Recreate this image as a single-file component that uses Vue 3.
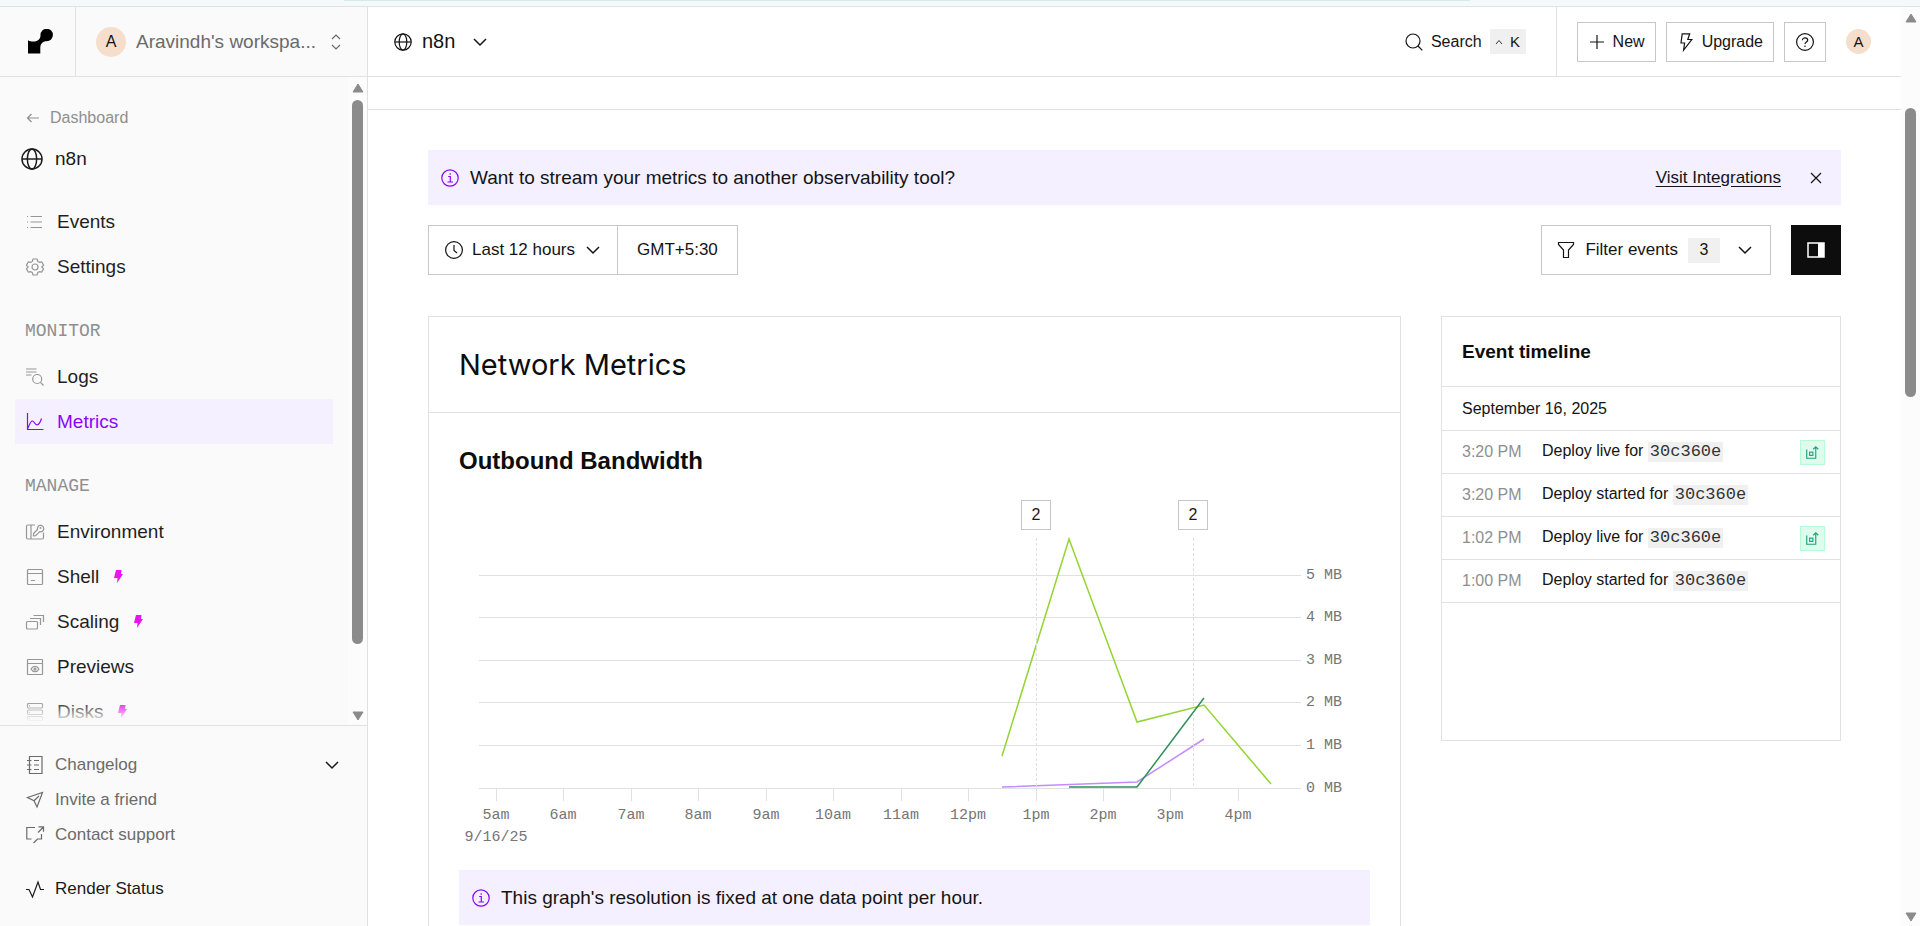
<script setup>
const primaryNav = [
  { label: 'Events', icon: 'list' },
  { label: 'Settings', icon: 'gear' },
]
const sections = [
  {
    title: 'MONITOR',
    items: [
      { label: 'Logs', icon: 'logs' },
      { label: 'Metrics', icon: 'metrics', active: true },
    ],
  },
  {
    title: 'MANAGE',
    items: [
      { label: 'Environment', icon: 'env' },
      { label: 'Shell', icon: 'shell', paid: true },
      { label: 'Scaling', icon: 'scaling', paid: true },
      { label: 'Previews', icon: 'previews' },
      { label: 'Disks', icon: 'disks', paid: true },
    ],
  },
]
const groups = [{ title: '', items: primaryNav }, ...sections]

const icons = {
  list: '<path d="M1 3.500h1M1 9h1M1 14.500h1M4.500 3.500H16M4.500 9H16M4.500 14.500H16"/>',
  gear: '<circle cx="9" cy="9" r="3"/><path d="M7 1h4l.7 2.400 1.600.9L15.600 3.800l2 3.300-1.800 1.900 1.800 1.900-2 3.300-2.300-.5-1.600.9L11 17H7l-.7-2.400-1.600-.9-2.300.5-2-3.300L2.200 9 .4 7.100l2-3.300 2.300.5 1.600-.9z" stroke-linejoin="round"/>',
  logs: '<path d="M0 1h10.500M0 4h10.500M0 7h5.500"/><circle cx="11.200" cy="11" r="4.500"/><path d="M14.500 14.300 17.500 17.500"/>',
  metrics: '<path d="M1.500 0v16.500H17.500M1.500 16C3.500 12 4.500 7.500 6.500 8c2 .6 3 4.500 5 3.800 1.500-.5 3-3 4-6.300"/>',
  env: '<path d="M9 2H2A1.500 1.500 0 0 0 .5 3.500v11A1.500 1.500 0 0 0 2 16h14a1.500 1.500 0 0 0 1.500-1.500V9.500M5 2v14M7.500 12.800v-2.300l4-4a3.200 3.200 0 1 1 2.200 2.200l-4 4z"/><circle cx="14.500" cy="5" r=".4"/>',
  shell: '<rect x="1.500" y="1.500" width="15" height="15" rx="1"/><path d="M1.500 5.500h15M5 12.500h4"/>',
  scaling: '<rect x=".5" y="8.500" width="11" height="7.500" rx="1"/><path d="M4 5.500h10.500V12M7.500 2.500h10V9"/>',
  previews: '<rect x="1.500" y="1.500" width="15" height="15" rx=".5"/><path d="M1.500 5.500h15M5 11c2-3.600 6-3.600 8 0-2 3.600-6 3.600-8 0z"/><circle cx="9" cy="11" r="1"/>',
  disks: '<rect x="1.500" y=".5" width="15" height="4.500" rx="1"/><rect x="1.500" y="7" width="15" height="4.500" rx="1"/><rect x="1.500" y="13.500" width="15" height="4" rx="1"/><path d="M3 2.800h1M3 9.300h1M3 15.600h1"/>',
  book: '<path d="M3.500.5H16v17H3.500zM1 4.500h4.500M1 9h4.500M1 13.500h4.500M8 4.500h5M8 9h5M8 13.500h5"/>',
  send: '<path d="M1.500 6.500 16.500 1.500 11 16 8 9.800zM8 9.800 13 5"/>',
  support: '<path d="M9 1.500H.8V13H5.500M15.500 8v5H11.500L7.500 17M12 6.500 17.500 1M12.500.8h5v5"/>',
  pulse: '<path d="M0 9.500h3L6.500 17 12 2l2.500 7.500H18"/>',
  globe: '<circle cx="9" cy="9" r="8.200"/><ellipse cx="9" cy="9" rx="3.800" ry="8.200"/><path d="M.8 9h16.400"/>',
  back: '<path d="M3.500 9h11.500M7.500 5 3.500 9l4 4"/>',
  chevron: '<path d="M3 6 9 12l6-6"/>',
  updown: '<path d="M5 6 9 2l4 4M5 12 9 16l4-4"/>',
  info: '<circle cx="9" cy="9" r="8.200"/><path d="M7.200 7.500H9.300V13M6.500 13h5.500M9.200 4.300v1.400"/>',
  search: '<circle cx="8" cy="8" r="7"/><path d="M13 13 17.300 17.300"/>',
  plus: '<path d="M9 2v14M2 9h14"/>',
  bolt: '<path d="M5.200.8h7.500L10.800 6.500h4L6.600 17l1-7H4z"/>',
  help: '<circle cx="9" cy="9" r="8.400"/><path d="M6.500 7.200C6.500 4 11.700 4 11.700 7.200 11.700 9 9 9 9 11M9 12.500V14"/>',
  clock: '<circle cx="9" cy="9" r="8.400"/><path d="M9 4v5.500L12 12"/>',
  filter: '<path d="M1.500 1.500h15v2L11.500 9v7.500h-5V9l-5-5.500z"/>',
  close: '<path d="M4 4 14 14M14 4 4 14"/>',
  deploy: '<path d="M1 5v12H13.500V1.500M10 4.500 13.500 1 17 4.500"/><rect x="5" y="8.500" width="4.500" height="4.500"/>',
}

const events = [
  { time: '3:20 PM', text: 'Deploy live for', live: true },
  { time: '3:20 PM', text: 'Deploy started for', live: false },
  { time: '1:02 PM', text: 'Deploy live for', live: true },
  { time: '1:00 PM', text: 'Deploy started for', live: false },
]

const gridLines = [
  { y: 96, label: '5 MB' },
  { y: 138, label: '4 MB' },
  { y: 181, label: '3 MB' },
  { y: 223, label: '2 MB' },
  { y: 266, label: '1 MB' },
  { y: 309, label: '0 MB' },
]
const ticks = [
  [37, '5am'], [104, '6am'], [172, '7am'], [239, '8am'], [307, '9am'], [374, '10am'],
  [442, '11am'], [509, '12pm'], [577, '1pm'], [644, '2pm'], [711, '3pm'], [779, '4pm'],
]
const markers = [577, 734]
const series = [
  { color: '#c48bfd', points: '543,308 678,303 745,260' },
  { color: '#93d530', points: '543,277 610,60 678,243 745,226 812,305' },
  { color: '#2f8f5b', points: '610,308 678,308 745,219' },
]
</script>

<template>
  <div class="app">
    <div class="strip"><span></span></div>

    <aside class="sidebar">
      <div class="brand">
        <a class="logo" href="#" aria-label="Home">
          <svg width="25" height="25" viewBox="0 0 25 25" fill="#000"><circle cx="18.700" cy="6" r="6.200"/><path d="M0 11.200c1.500 1 3 1.300 5.500 1.300 4.500 0 6.800-2.500 7.500-7l5.500 6.600c-3.500.5-6.200 2.700-6.200 6.900v5.500H0z"/></svg>
        </a>
        <button class="workspace" type="button">
          <span class="avatar">A</span>
          <span class="workspace-name">Aravindh's workspa...</span>
          <svg class="icon" viewBox="0 0 18 18" v-html="icons.updown"></svg>
        </button>
      </div>

      <div class="menu">
        <nav class="menu-list">
          <a class="back" href="#"><svg class="icon" viewBox="0 0 18 18" v-html="icons.back"></svg>Dashboard</a>
          <a class="service" href="#"><svg class="icon" viewBox="0 0 18 18" v-html="icons.globe"></svg>n8n</a>
          <div v-for="g in groups" :key="g.title">
            <h2 v-if="g.title" class="section-title">{{ g.title }}</h2>
            <a v-for="i in g.items" :key="i.label" class="item" :class="{ active: i.active }" href="#">
              <svg class="icon" viewBox="0 0 18 18" v-html="icons[i.icon]"></svg>
              {{ i.label }}
              <svg v-if="i.paid" class="paid" width="9" height="13" viewBox="0 0 9 13"><path d="M2 0h5.500L7 4h2L3 13l.5-5H0z" fill="#e815f0"/></svg>
            </a>
          </div>
        </nav>
        <div class="fade"></div>
        <div class="scrollbar" aria-hidden="true">
          <svg width="12" height="10" viewBox="0 0 12 10"><path d="M6 1 11 9H1z" /></svg>
          <div class="track"><div class="thumb menu-thumb"></div></div>
          <svg width="12" height="10" viewBox="0 0 12 10"><path d="M6 9 11 1H1z" /></svg>
        </div>
      </div>

      <div class="foot">
        <button class="foot-row" type="button">
          <svg class="icon" viewBox="0 0 18 18" v-html="icons.book"></svg>Changelog
          <svg class="icon chev" viewBox="0 0 18 18" v-html="icons.chevron"></svg>
        </button>
        <a class="foot-row" href="#"><svg class="icon" viewBox="0 0 18 18" v-html="icons.send"></svg>Invite a friend</a>
        <a class="foot-row" href="#"><svg class="icon" viewBox="0 0 18 18" v-html="icons.support"></svg>Contact support</a>
        <a class="foot-row status" href="#"><svg class="icon" viewBox="0 0 18 18" v-html="icons.pulse"></svg>Render Status</a>
      </div>
    </aside>

    <div class="main">
      <header class="topbar">
        <button class="crumb" type="button">
          <svg class="icon" viewBox="0 0 18 18" v-html="icons.globe"></svg>n8n
          <svg class="icon chev" viewBox="0 0 18 18" v-html="icons.chevron"></svg>
        </button>
        <button class="search" type="button">
          <svg class="icon" viewBox="0 0 18 18" v-html="icons.search"></svg>Search
          <kbd><svg width="8" height="6" viewBox="0 0 8 6"><path d="M1 5 4 1.500 7 5" /></svg>K</kbd>
        </button>
        <div class="actions">
          <button class="btn" type="button"><svg class="icon" viewBox="0 0 18 18" v-html="icons.plus"></svg>New</button>
          <button class="btn" type="button"><svg class="icon" viewBox="0 0 18 18" v-html="icons.bolt"></svg>Upgrade</button>
          <button class="btn help" type="button" aria-label="Help"><svg class="icon" viewBox="0 0 18 18" v-html="icons.help"></svg></button>
          <button class="avatar small" type="button">A</button>
        </div>
      </header>
      <div class="subbar"></div>

      <main class="content">
        <div class="notice">
          <svg class="icon" viewBox="0 0 18 18" v-html="icons.info"></svg>
          <span>Want to stream your metrics to another observability tool?</span>
          <a href="#">Visit Integrations</a>
          <button class="close" type="button" aria-label="Dismiss"><svg class="icon" viewBox="0 0 18 18" v-html="icons.close"></svg></button>
        </div>

        <div class="controls">
          <div class="range">
            <button type="button">
              <svg class="icon" viewBox="0 0 18 18" v-html="icons.clock"></svg>Last 12 hours
              <svg class="icon chev" viewBox="0 0 18 18" v-html="icons.chevron"></svg>
            </button>
            <button class="zone" type="button">GMT+5:30</button>
          </div>
          <div class="filters">
            <button class="filter" type="button">
              <svg class="icon" viewBox="0 0 18 18" v-html="icons.filter"></svg>Filter events
              <span class="count">3</span>
              <svg class="icon chev" viewBox="0 0 18 18" v-html="icons.chevron"></svg>
            </button>
            <button class="panel-toggle" type="button" aria-label="Toggle event timeline">
              <svg width="18" height="16" viewBox="0 0 18 16"><path d="M1 1h16v14H1z" fill="none" stroke="#fff" stroke-width="1.500"/><path d="M11 1h6v14h-6z" fill="#fff"/></svg>
            </button>
          </div>
        </div>

        <div class="columns">
          <section class="card">
            <h1>Network Metrics</h1>
            <div class="card-body">
              <h3>Outbound Bandwidth</h3>
              <svg class="chart" viewBox="0 0 911 371" role="img" aria-label="Outbound bandwidth chart">
                <g v-for="l in gridLines" :key="l.label">
                  <rect x="20" :y="l.y" width="822" height="1" class="rule" />
                  <text x="847" :y="l.y + 4">{{ l.label }}</text>
                </g>
                <g v-for="t in ticks" :key="t[1]">
                  <rect :x="t[0]" y="309" width="1" height="13" class="rule" />
                  <text :x="t[0]" y="340" text-anchor="middle">{{ t[1] }}</text>
                </g>
                <text x="37" y="362" text-anchor="middle">9/16/25</text>
                <polyline v-for="s in series" :key="s.color" :points="s.points" :stroke="s.color" class="line" />
                <g v-for="m in markers" :key="m">
                  <path :d="`M${m + 0.5} 59V309`" class="dash" />
                  <rect :x="m - 14.5" y="21.5" width="29" height="29" class="marker" />
                  <text :x="m" y="41" text-anchor="middle" class="marker-text">2</text>
                </g>
              </svg>
              <div class="notice">
                <svg class="icon" viewBox="0 0 18 18" v-html="icons.info"></svg>
                <span>This graph's resolution is fixed at one data point per hour.</span>
              </div>
            </div>
          </section>

          <section class="timeline">
            <h2>Event timeline</h2>
            <p class="date">September 16, 2025</p>
            <ul>
              <li v-for="(e, n) in events" :key="n">
                <time>{{ e.time }}</time>
                <span>{{ e.text }} <code>30c360e</code></span>
                <i v-if="e.live" class="live"><svg class="icon" viewBox="0 0 18 18" v-html="icons.deploy"></svg></i>
              </li>
            </ul>
          </section>
        </div>
      </main>
    </div>

    <div class="scrollbar page-scroll" aria-hidden="true">
      <svg width="12" height="10" viewBox="0 0 12 10"><path d="M6 1 11 9H1z" /></svg>
      <div class="track"><div class="thumb page-thumb"></div></div>
      <svg width="12" height="10" viewBox="0 0 12 10"><path d="M6 9 11 1H1z" /></svg>
    </div>
  </div>
</template>

<style>
body { margin: 0; }
</style>

<style scoped>
* { box-sizing: border-box; }
h1, h2, h3, p, ul { margin: 0; padding: 0; }
ul { list-style: none; }
a { color: inherit; text-decoration: none; }
button { font: inherit; color: inherit; background: none; border: 0; padding: 0; margin: 0; text-align: left; }
.app {
  display: grid;
  grid-template-columns: 368px minmax(0, 1fr) 19px;
  grid-template-rows: 7px minmax(0, 1fr);
  height: 100vh;
  overflow: hidden;
  font-family: "Liberation Sans", Arial, sans-serif;
  font-size: 16px;
  color: #141414;
  background: #fff;
}
.icon { width: 18px; height: 18px; flex: none; fill: none; stroke: currentColor; stroke-width: 1.2; overflow: visible; }
.strip { grid-column: 1 / -1; background: #f4fafc; border-bottom: 1px solid #dfe3e5; padding: 0 450px 0 344px; }
.strip span { display: block; height: 1px; background: #d8e9ee; }

.sidebar { display: flex; flex-direction: column; min-height: 0; background: #fafafa; border-right: 1px solid #e1e1e1; }
.brand { display: flex; flex: none; height: 70px; border-bottom: 1px solid #e1e1e1; }
.logo { display: flex; align-items: center; justify-content: center; width: 76px; padding-left: 6px; border-right: 1px solid #e1e1e1; }
.workspace { flex: 1; display: flex; align-items: center; padding: 0 22px 0 20px; gap: 10px; font-size: 19px; color: #6b6b6b; }
.workspace-name { flex: 1; }
.avatar { display: flex; align-items: center; justify-content: center; flex: none; width: 30px; height: 30px; border-radius: 50%; background: #f6decd; color: #141414; font-size: 16px; }
.avatar.small { width: 25px; height: 25px; font-size: 15px; margin-left: 10px; }

.menu { position: relative; display: flex; flex: 1; min-height: 0; overflow: hidden; }
.menu-list { flex: 1; padding: 29px 15px 0; overflow: hidden; }
.back { display: flex; align-items: center; height: 24px; padding-left: 9px; gap: 8px; font-size: 16px; color: #8f8f8f; }
.service { display: flex; align-items: center; height: 30px; margin: 14px 0 25px; padding-left: 6px; gap: 12px; font-size: 19px; color: #1a1a1a; }
.service .icon { width: 22px; height: 22px; }
.section-title { margin: 30px 0 11px; padding-left: 10px; font: 400 18px/24px "Liberation Mono", monospace; color: #8f8f8f; }
.item { display: flex; align-items: center; height: 45px; padding-left: 11px; gap: 13px; font-size: 19px; color: #1f1f1f; }
.item .icon { color: #969696; }
.item.active, .item.active .icon { color: #8a05ff; }
.item.active { background: #f4f0ff; }
.paid { margin-left: 2px; }
.fade { position: absolute; left: 0; right: 19px; bottom: 0; height: 24px; background: linear-gradient(rgba(250, 250, 250, 0), #fafafa 90%); }
.scrollbar { display: flex; flex: none; flex-direction: column; align-items: center; width: 19px; padding: 6px 0 4px; background: #fcfcfc; }
.scrollbar svg { flex: none; fill: #8b8b8b; stroke: #8b8b8b; stroke-linejoin: round; }
.track { flex: 1; display: flex; flex-direction: column; padding: 7px 0; }
.thumb { width: 11px; border-radius: 6px; background: #8b8b8b; }
.menu-thumb { height: 90%; }
.page-scroll { grid-row: 2; grid-column: 3; }
.page-thumb { height: 33%; margin-top: 78px; }

.foot { flex: none; padding: 21px 20px 20px 26px; border-top: 1px solid #e1e1e1; }
.foot-row { display: flex; align-items: center; width: 100%; height: 35px; gap: 11px; font-size: 17px; color: #6b6b6b; }
.foot-row .chev { margin-left: auto; margin-right: 6px; color: #1a1a1a; }
.status { margin-top: 19px; color: #1a1a1a; }
.chev { stroke-width: 1.5; }

.main { min-width: 0; min-height: 0; overflow: hidden; }
.topbar { display: flex; align-items: stretch; height: 70px; border-bottom: 1px solid #e1e1e1; }
.crumb { display: flex; align-items: center; margin-right: auto; padding-left: 26px; gap: 10px; font-size: 20px; }
.crumb .chev { margin-left: 6px; }
.search { display: flex; align-items: center; margin-right: 30px; gap: 8px; }
.search kbd { display: flex; align-items: center; justify-content: center; gap: 7px; width: 36px; height: 25px; background: #f0f0f0; font: inherit; font-size: 15px; }
.search kbd svg { fill: none; stroke: #333; }
.actions { display: flex; align-items: center; gap: 10px; padding: 0 30px 0 20px; border-left: 1px solid #e1e1e1; }
.btn { display: flex; align-items: center; justify-content: center; height: 40px; padding: 0 10px; gap: 7px; border: 1px solid #c7c7c7; }
.btn.help { padding: 0 11px; }

.subbar { height: 33px; border-bottom: 1px solid #e1e1e1; }
.content { padding: 40px 60px; }
.notice { display: flex; align-items: center; height: 55px; padding: 0 16px 0 13px; gap: 11px; background: #f4f0ff; font-size: 19px; }
.notice > .icon { color: #8a05ff; }
.notice span { flex: 1; white-space: nowrap; }
.notice a { font-size: 17px; text-decoration: underline; text-underline-offset: 3px; }
.close { display: flex; margin-left: 15px; }
.controls { display: flex; justify-content: space-between; margin-top: 20px; font-size: 17px; }
.range, .filters { display: flex; }
.range button, .filter { display: flex; align-items: center; height: 50px; padding: 0 15px 0 16px; gap: 10px; border: 1px solid #c7c7c7; }
.range button { gap: 9px; }
.range .zone { border-left: 0; padding: 0 19px; }
.filters { gap: 20px; }
.filter { padding: 0 16px 0 15px; }
.filter .chev { margin-left: 6px; }
.count { display: flex; align-items: center; justify-content: center; width: 32px; height: 25px; background: #f0f0f0; font-size: 16px; }
.panel-toggle { display: flex; align-items: center; justify-content: center; width: 50px; height: 50px; background: #0d0d0d; }

.columns { display: grid; grid-template-columns: minmax(0, 1fr) 400px; gap: 40px; align-items: start; margin-top: 41px; }
.card { border: 1px solid #e1e1e1; }
.card h1 { height: 96px; padding: 0 30px; border-bottom: 1px solid #e1e1e1; font: 400 29px/96px Inter, sans-serif; color: #0d0d0d; }
.card-body { padding: 30px; }
.card-body h3 { font-size: 24px; line-height: 36px; color: #0d0d0d; }
.chart { display: block; width: 100%; margin-bottom: 20px; }
.chart text { font-family: "Liberation Mono", monospace; font-size: 15px; fill: #757575; }
.rule { fill: #e1e1e1; }
.line { fill: none; stroke-width: 1.5; }
.dash { stroke: #e1e1e1; stroke-dasharray: 3 2; fill: none; }
.marker { fill: #fff; stroke: #c7c7c7; }
.chart .marker-text { font-family: "Liberation Sans", sans-serif; font-size: 16px; fill: #1a1a1a; }

.timeline { min-height: 425px; border: 1px solid #e1e1e1; }
.timeline h2 { height: 70px; padding-left: 20px; border-bottom: 1px solid #e1e1e1; font-size: 19px; line-height: 69px; color: #0d0d0d; }
.date { height: 44px; padding-left: 20px; border-bottom: 1px solid #e1e1e1; line-height: 43px; }
.timeline li { display: grid; grid-template-columns: 80px 1fr auto; align-items: center; height: 43px; padding: 0 15px 0 20px; border-bottom: 1px solid #e1e1e1; }
.timeline time { color: #8f8f8f; }
.timeline code { display: inline-block; padding: 0 2px; background: #f0f0f0; font: 17px/20px "Liberation Mono", monospace; color: #333; }
.live { display: flex; align-items: center; justify-content: center; width: 25px; height: 25px; border: 1px solid #b5fbd5; background: #defceb; color: #1fa37f; }
.live .icon { width: 13px; height: 13px; stroke-width: 1.6; }
</style>
